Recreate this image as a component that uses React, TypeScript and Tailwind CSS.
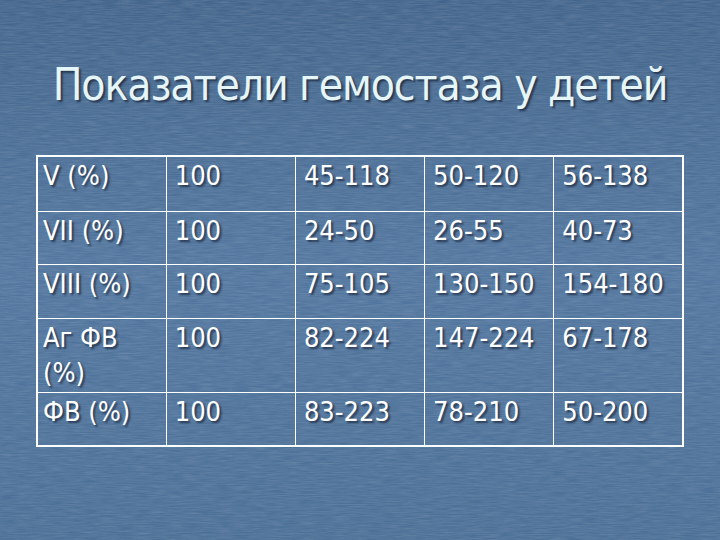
const rows: { label: React.ReactNode; values: string[]; h: string }[] = [
  { label: "V (%)", values: ["100", "45-118", "50-120", "56-138"], h: "h-[55px]" },
  { label: "VII (%)", values: ["100", "24-50", "26-55", "40-73"], h: "h-[53px]" },
  { label: "VIII (%)", values: ["100", "75-105", "130-150", "154-180"], h: "h-[54px]" },
  {
    label: (
      <>
        Аг ФВ
        <br />
        (%)
      </>
    ),
    values: ["100", "82-224", "147-224", "67-178"],
    h: "h-[74px]",
  },
  { label: "ФВ (%)", values: ["100", "83-223", "78-210", "50-200"], h: "h-[54px]" },
];

function Texture() {
  return (
    <svg className="absolute inset-0 h-full w-full" width="720" height="540">
      <filter id="grain">
        <feTurbulence type="fractalNoise" baseFrequency="0.06 0.9" numOctaves="3" seed="4" />
        <feColorMatrix
          type="matrix"
          values="0 0 0 0 1  0 0 0 0 1  0 0 0 0 1  0 0 0 0.35 -0.08"
        />
      </filter>
      <rect width="720" height="540" filter="url(#grain)" opacity="0.55" />
    </svg>
  );
}

export default function App() {
  return (
    <div className="relative h-[540px] w-[720px] overflow-hidden bg-gradient-to-b from-[#43658b] via-[#52769f] to-[#4b6f96] font-['DejaVu_Sans_Condensed','DejaVu_Sans',sans-serif] text-white">
      <Texture />
      <div className="relative flex flex-col items-center">
        <h1 className="mt-[57px] text-[44px] leading-[56px] tracking-[-1.1px] text-[#e6f5f8] [text-shadow:2px_2px_2px_rgba(20,30,50,0.7)]">
          Показатели гемостаза у детей
        </h1>
        <table className="mt-[42px] w-[648px] table-fixed border-collapse border-2 border-white text-[27px] leading-[35px] [text-shadow:2px_2px_2px_rgba(20,30,50,0.7)]">
          <tbody>
            {rows.map((r, i) => (
              <tr key={i} className={r.h}>
                <td className="border border-white px-[5px] pt-[1px] align-top">{r.label}</td>
                {r.values.map((v, j) => (
                  <td key={j} className="border border-white px-[8px] pt-[1px] align-top">
                    {v}
                  </td>
                ))}
              </tr>
            ))}
          </tbody>
        </table>
      </div>
    </div>
  );
}
